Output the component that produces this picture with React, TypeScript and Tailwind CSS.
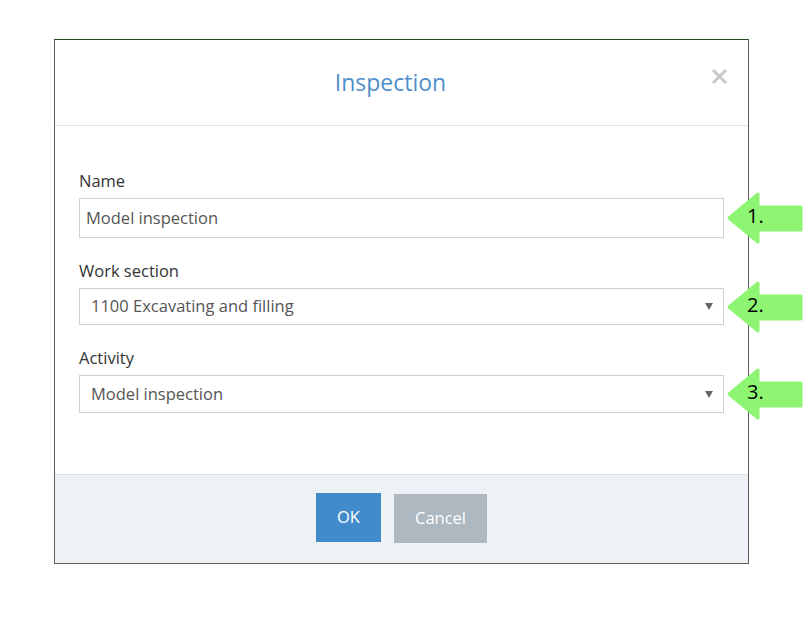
import React from "react";

// Green callout pointing left at a form field, with a step number on it
function StepArrow({ n }: { n: number }) {
  return (
    <div className="absolute left-[calc(100%+3px)] top-1/2 -translate-y-1/2 w-[77px] h-[52px]">
      <svg width="77" height="52" viewBox="0 0 77 52" className="block">
        <path
          d="M2 26 L31 2 L31 15 L74 15 L74 38 L31 38 L31 50 Z"
          fill="#8df571"
          stroke="#8df571"
          strokeWidth="3"
          strokeLinejoin="round"
        />
      </svg>
      <span className="absolute left-[20px] top-[14px] text-[20px] leading-none text-black font-['Open_Sans',sans-serif]">
        {n}.
      </span>
    </div>
  );
}

function Caret() {
  return (
    <svg width="8" height="7" viewBox="0 0 8 7" className="block">
      <path d="M0 0 H8 L4 7 Z" fill="#666" />
    </svg>
  );
}

export default function App() {
  return (
    <div className="w-[809px] h-[624px] bg-white pl-[54px] pt-[39px] font-['Open_Sans',sans-serif]">
      <div className="w-[695px] h-[525px] flex flex-col border border-[#5c5c5c] border-t-[#1e4a1e] bg-white">
        {/* header */}
        <div className="relative h-[86px] shrink-0 flex items-center justify-center pr-[22px] border-b border-[#e3e3e3]">
          <h1 className="text-[23px] text-[#4f8fcb] leading-none pb-[1px]">Inspection</h1>
          <button className="absolute right-[20px] top-[27px] w-[18px] h-[18px] flex items-center justify-center">
            <svg width="17" height="17" viewBox="0 0 17 17">
              <path d="M2 2 L15 15 M15 2 L2 15" stroke="#c9c9c9" strokeWidth="3" />
            </svg>
          </button>
        </div>

        {/* body */}
        <div className="flex-1 px-[24px] pt-[43px] flex flex-col">
          <label className="text-[16.5px] leading-[23px] text-[#333]">Name</label>
          <div className="relative mt-[6px]">
            <div className="h-[40px] border border-[#d0d0d0] flex items-center px-[6px] text-[16.5px] text-[#555]">
              Model inspection
            </div>
            <StepArrow n={1} />
          </div>

          <label className="mt-[21px] text-[16.5px] leading-[23px] text-[#333]">Work section</label>
          <div className="relative mt-[6px]">
            <div className="h-[37px] border border-[#d0d0d0] flex items-center justify-between pl-[11px] pr-[10px] text-[16.5px] text-[#555]">
              <span>1100 Excavating and filling</span>
              <Caret />
            </div>
            <StepArrow n={2} />
          </div>

          <label className="mt-[21px] text-[16.5px] leading-[23px] text-[#333]">Activity</label>
          <div className="relative mt-[6px]">
            <div className="h-[38px] border border-[#d0d0d0] flex items-center justify-between pl-[11px] pr-[10px] text-[16.5px] text-[#555]">
              <span>Model inspection</span>
              <Caret />
            </div>
            <StepArrow n={3} />
          </div>
        </div>

        {/* footer */}
        <div className="h-[89px] shrink-0 bg-[#eef1f5] border-t border-[#dde3e9] flex justify-center pt-[18px] gap-[13px]">
          <button className="w-[65px] h-[49px] bg-[#428bca] text-white text-[16.5px]">OK</button>
          <button className="mt-[1px] w-[93px] h-[49px] bg-[#adb8c1] text-white text-[16.5px]">Cancel</button>
        </div>
      </div>
    </div>
  );
}
